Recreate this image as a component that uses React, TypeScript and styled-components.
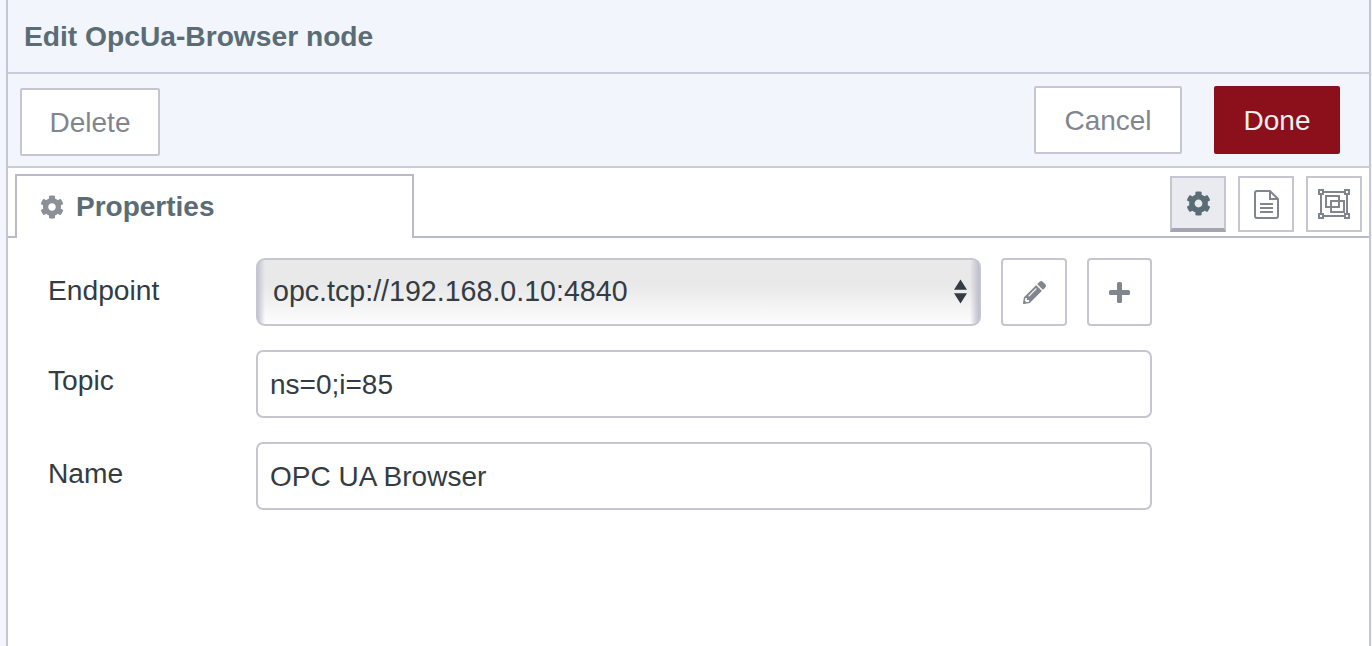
import React from "react";
import styled, { createGlobalStyle } from "styled-components";
import { FaCog, FaPencilAlt } from "react-icons/fa";

const Global = createGlobalStyle`
  html, body { margin: 0; padding: 0; background: #fff; overflow: hidden; }
  * { box-sizing: border-box; }
  #root { width: 1372px; height: 646px; }
`;

const Page = styled.div`
  width: 1372px;
  height: 646px;
  background: #f2f5fb;
  padding-left: 6px;
  font-family: "Liberation Sans", Arial, sans-serif;
  overflow: hidden;
`;

const Tray = styled.div`
  width: 1365px;
  height: 646px;
  border-left: 2px solid #c5c6d2;
  border-right: 2px solid #c5c6d2;
  display: flex;
  flex-direction: column;
`;

const Header = styled.div`
  height: 74px;
  flex: none;
  border-bottom: 2px solid #c9cbd9;
  padding: 0 0 0 16px;
  display: flex;
  align-items: center;
  font-size: 28.2px;
  font-weight: 700;
  color: #5a6c75;
`;

const Toolbar = styled.div`
  height: 94px;
  flex: none;
  border-bottom: 2px solid #c9cbd9;
  padding: 12px 29px 0 12px;
  display: flex;
  align-items: flex-start;
`;

const Button = styled.button<{ $primary?: boolean; $w: number; $top?: number }>`
  width: ${(p) => p.$w}px;
  height: 68px;
  margin-top: ${(p) => p.$top ?? 0}px;
  border: ${(p) => (p.$primary ? "none" : "2px solid #c5c6d2")};
  border-radius: 2px;
  background: ${(p) => (p.$primary ? "#8c101c" : "#fff")};
  color: ${(p) => (p.$primary ? "#eeeeee" : "#81858e")};
  font-family: inherit;
  font-size: 28px;
  padding: 2px 0 0;
`;

const Spacer = styled.div`
  flex: 1;
`;

const Gap = styled.div<{ $w: number }>`
  width: ${(p) => p.$w}px;
  flex: none;
`;

const Body = styled.div`
  flex: 1;
  background: #fff;
  display: flex;
  flex-direction: column;
`;

const TabBar = styled.div`
  height: 70px;
  flex: none;
  border-bottom: 2px solid #b9bbc6;
  padding: 6px 7px 0 7px;
  display: flex;
  align-items: flex-start;
`;

const Tab = styled.div`
  width: 399px;
  height: 64px;
  background: #fff;
  border: 2px solid #b9bbc6;
  border-bottom: none;
  padding: 0 0 0 23px;
  display: flex;
  align-items: center;
  gap: 12px;
  font-size: 28px;
  font-weight: 700;
  color: #5a6c75;
  svg { color: #8c9197; font-size: 24px; }
`;

const TabIcons = styled.div`
  display: flex;
  gap: 12px;
  margin-left: auto;
  margin-top: 2px;
`;

const IconTab = styled.div<{ $active?: boolean }>`
  width: 56px;
  height: 56px;
  border: 2px solid #c5c6d2;
  ${(p) => p.$active && "border-bottom: 4px solid #a3a5b0;"}
  background: ${(p) => (p.$active ? "#e9ebf1" : "#fff")};
  color: ${(p) => (p.$active ? "#5a6c75" : "#81858e")};
  display: flex;
  align-items: center;
  justify-content: center;
  font-size: 25px;
`;

const Form = styled.div`
  padding: 20px 0 0 40px;
  display: flex;
  flex-direction: column;
  gap: 24px;
`;

const Row = styled.div`
  display: flex;
  align-items: flex-start;
  height: 68px;
`;

const Label = styled.div<{ $top: number }>`
  width: 208px;
  flex: none;
  padding-top: ${(p) => p.$top}px;
  font-size: 28.2px;
  line-height: 32px;
  color: #333b43;
`;

const Select = styled.div`
  width: 725px;
  height: 68px;
  border: 2px solid #c5c6d2;
  border-radius: 9px;
  background: linear-gradient(90deg, #c5c6d2 0, rgba(197, 198, 210, 0) 7px),
    linear-gradient(270deg, #bdbeca 0, rgba(189, 190, 202, 0) 9px),
    linear-gradient(180deg, #e9e9e9 0, #e9e9e9 40%, #fdfdfd 100%);
  display: flex;
  align-items: center;
  padding: 0 12px 2px 15px;
  font-size: 28.6px;
  color: #333b43;
`;

const Arrows = styled.svg`
  margin-left: auto;
  flex: none;
`;

const Square = styled.div<{ $w: number }>`
  width: ${(p) => p.$w}px;
  height: 68px;
  flex: none;
  margin-left: 20px;
  border: 2px solid #c5c6d2;
  border-radius: 4px;
  background: #fff;
  color: #81858e;
  display: flex;
  align-items: center;
  justify-content: center;
`;

const Input = styled.div`
  width: 896px;
  height: 68px;
  border: 2px solid #c5c6d2;
  border-radius: 7px;
  background: #fff;
  display: flex;
  align-items: center;
  padding: 2px 12px 0;
  font-size: 28px;
  color: #333b43;
`;

const ExpandIcon = () => (
  <svg width="32" height="30" viewBox="0 0 32 30" fill="none" stroke="#81858e" strokeWidth="2">
    <rect x="3" y="3" width="26" height="24" />
    <rect x="8" y="7" width="13" height="11" />
    <rect x="13" y="12" width="13" height="11" />
    <g fill="#fff">
      <rect x="1" y="1" width="4" height="4" />
      <rect x="27" y="1" width="4" height="4" />
      <rect x="1" y="25" width="4" height="4" />
      <rect x="27" y="25" width="4" height="4" />
    </g>
  </svg>
);

const DocIcon = () => (
  <svg width="25" height="29" viewBox="0 0 25 29" fill="none" stroke="#81858e" strokeWidth="2">
    <path d="M3 1 H16 L24 9 V26 Q24 28 22 28 H3 Q1 28 1 26 V3 Q1 1 3 1 Z" />
    <path d="M16 1 V9 H24" />
    <path d="M6 14 H19 M6 18 H19 M6 22 H19" />
  </svg>
);

const PlusIcon = () => (
  <svg width="21" height="21" viewBox="0 0 21 21" fill="#81858e">
    <path d="M8 1.5 Q8 0 9.5 0 H11.5 Q13 0 13 1.5 V8 H19.5 Q21 8 21 9.5 V11.5 Q21 13 19.5 13 H13 V19.5 Q13 21 11.5 21 H9.5 Q8 21 8 19.5 V13 H1.5 Q0 13 0 11.5 V9.5 Q0 8 1.5 8 H8 Z" />
  </svg>
);

export default function App() {
  return (
    <Page>
      <Global />
      <Tray>
        <Header>Edit OpcUa-Browser node</Header>
        <Toolbar>
          <Button $w={140} $top={2}>Delete</Button>
          <Spacer />
          <Button $w={148}>Cancel</Button>
          <Gap $w={32} />
          <Button $primary $w={126}>Done</Button>
        </Toolbar>
        <Body>
          <TabBar>
            <Tab>
              <FaCog />
              Properties
            </Tab>
            <TabIcons>
              <IconTab $active><FaCog /></IconTab>
              <IconTab><DocIcon /></IconTab>
              <IconTab><ExpandIcon /></IconTab>
            </TabIcons>
          </TabBar>
          <Form>
            <Row>
              <Label $top={16}>Endpoint</Label>
              <Select>
                opc.tcp://192.168.0.10:4840
                <Arrows width="13" height="25" viewBox="0 0 14 26" fill="#333b43">
                  <path d="M7 0 L14 11 H0 Z M0 15 H14 L7 26 Z" />
                </Arrows>
              </Select>
              <Square $w={66}><FaPencilAlt size={23} /></Square>
              <Square $w={65}><PlusIcon /></Square>
            </Row>
            <Row>
              <Label $top={14}>Topic</Label>
              <Input>ns=0;i=85</Input>
            </Row>
            <Row>
              <Label $top={15}>Name</Label>
              <Input>OPC UA Browser</Input>
            </Row>
          </Form>
        </Body>
      </Tray>
    </Page>
  );
}
